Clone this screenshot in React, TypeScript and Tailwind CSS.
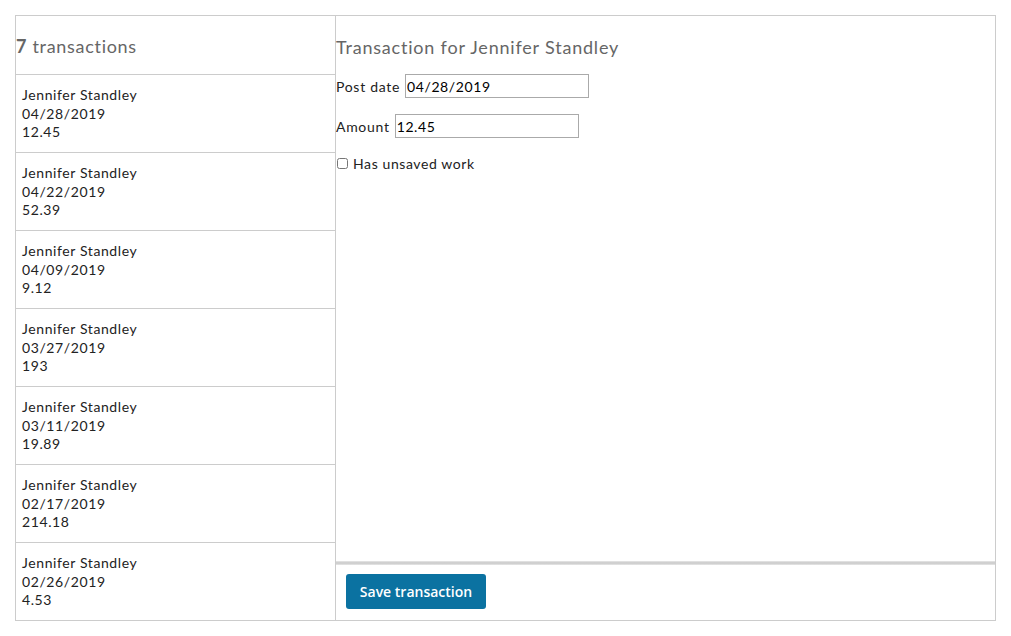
const txns = [
  { date: "04/28/2019", amount: "12.45" },
  { date: "04/22/2019", amount: "52.39" },
  { date: "04/09/2019", amount: "9.12" },
  { date: "03/27/2019", amount: "193" },
  { date: "03/11/2019", amount: "19.89" },
  { date: "02/17/2019", amount: "214.18" },
  { date: "02/26/2019", amount: "4.53" },
];

export default function App() {
  return (
    <div className="bg-white w-[1011px] h-[636px] p-[15px] font-['Lato',sans-serif] text-[#222]">
      <div className="flex border border-[#ccc] w-[981px] h-[606px]">
        {/* list */}
        <div className="w-[320px] flex flex-col border-r border-[#ccc]">
          <div className="h-[59px] shrink-0 border-b border-[#ccc] flex items-center pt-[2px]">
            <h2 className="text-[18px] text-[#666] tracking-[0.7px]">
              <span className="font-bold">7</span> transactions
            </h2>
          </div>
          {txns.map((t, i) => (
            <div
              key={i}
              className={
                "pl-[6px] pt-[11px] text-[14px] leading-[18.7px] tracking-[0.6px] " +
                (i < txns.length - 1 ? "h-[78px] shrink-0 border-b border-[#ccc]" : "flex-1")
              }
            >
              <div>Jennifer Standley</div>
              <div>{t.date}</div>
              <div>{t.amount}</div>
            </div>
          ))}
        </div>

        {/* detail */}
        <div className="flex-1 flex flex-col">
          <div className="flex-1 pt-[19px]">
            <h2 className="text-[18px] text-[#666] leading-[24px] tracking-[0.8px]">Transaction for Jennifer Standley</h2>
            <div className="mt-[15px] flex items-center text-[14px] h-[24px] tracking-[0.7px]">
              <span>Post date</span>
              <input
                readOnly
                defaultValue="04/28/2019"
                className="ml-[5px] w-[184px] h-[24px] border border-[#aaa] px-[1px] text-[14px] text-black font-['Lato',sans-serif] tracking-[0.6px] outline-none"
              />
            </div>
            <div className="mt-[16px] flex items-center text-[14px] h-[24px] tracking-[0.7px]">
              <span>Amount</span>
              <input
                readOnly
                defaultValue="12.45"
                className="ml-[5px] w-[184px] h-[24px] border border-[#aaa] px-[1px] text-[14px] text-black font-['Lato',sans-serif] tracking-[0.6px] outline-none"
              />
            </div>
            <label className="mt-[13px] flex items-center text-[14px] gap-[5px] h-[24px] tracking-[0.6px]">
              <input type="checkbox" className="w-[11px] h-[11px] ml-[1px] accent-gray-400" />
              <span>Has unsaved work</span>
            </label>
          </div>
          <div className="h-[4px] mb-[1px] bg-gradient-to-b from-[#e8e8e8] via-[#c8c8c8] to-[#e8e8e8]" />
          <div className="h-[54px] pl-[10px] pt-[8px]">
            <button className="h-[35px] w-[140px] rounded-[3px] bg-[#0b72a1] text-white text-[14px] font-semibold font-['Open_Sans',sans-serif]">
              Save transaction
            </button>
          </div>
        </div>
      </div>
    </div>
  );
}
